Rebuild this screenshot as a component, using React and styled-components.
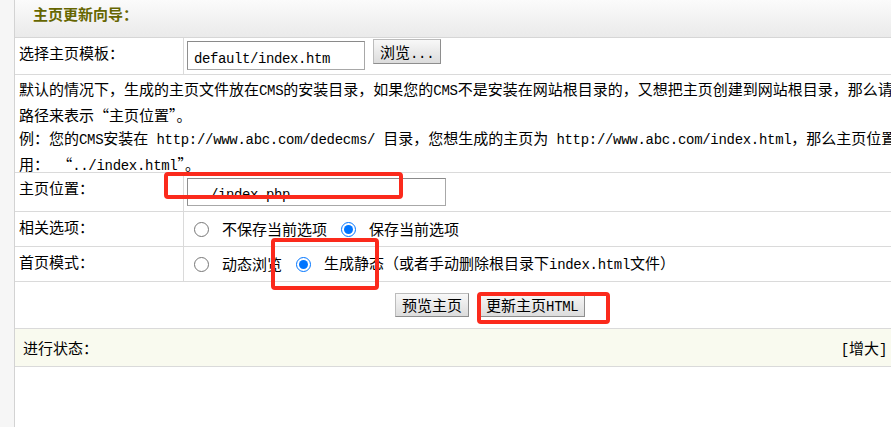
import React from 'react';
import styled, { createGlobalStyle } from 'styled-components';

const GlobalStyle = createGlobalStyle`
    html, body {
        margin: 0;
        padding: 0;
        background: #fff;
        overflow: hidden;
    }
    body {
        font-family: "Noto Sans CJK SC", "Liberation Sans", sans-serif;
        font-size: 15px;
        color: #000;
    }
`
const Page = styled.div`
    position: relative;
    display: flex;
    width: 891px;
    height: 427px;
    overflow: hidden;
`
const Sidebar = styled.div`
    width: 14px;
    flex: none;
    background: #f6f6f6;
    border-right: 1px solid #d3d3d3;
`
const Main = styled.div`
    flex: 1;
    min-width: 0;
    display: flex;
    flex-direction: column;
`
const Header = styled.div`
    height: 38px;
    flex: none;
    box-sizing: border-box;
    border-bottom: 1px solid #d6d6d6;
    background: linear-gradient(#fbfbfb, #eaeaea);
    padding-left: 18px;
    font-weight: bold;
    color: #666600;
    line-height: 28px;
    white-space: nowrap;
`
const Row = styled.div`
    display: flex;
    flex: none;
    height: ${props => props.$h}px;
    box-sizing: border-box;
    border-bottom: 1px solid #dadada;
    background: ${props => props.$tint ? '#f9faef' : '#fff'};
`
const Label = styled.div`
    width: 169px;
    flex: none;
    box-sizing: border-box;
    border-right: 1px solid #dadada;
    padding: 4px 0 0 4px;
    line-height: 22px;
    white-space: nowrap;
`
const Field = styled.div`
    flex: 1;
    display: flex;
    align-items: ${props => props.$top ? 'flex-start' : 'center'};
    padding-left: ${props => props.$pad}px;
    white-space: nowrap;
`
const Mono = styled.span`
    font-family: "Liberation Mono", monospace;
    font-size: 14px;
    letter-spacing: -0.3px;
`
const TextInput = styled.input`
    width: ${props => props.$w}px;
    height: ${props => props.$h}px;
    margin: ${props => props.$mt}px 0 0 0;
    box-sizing: border-box;
    padding: 6px 0 0 6px;
    border: 1px solid #a8a8a8;
    border-top-color: #8a8a8a;
    border-left-color: #8f8f8f;
    border-radius: 0;
    background: #fff;
    outline: none;
    font-family: "Liberation Mono", monospace;
    font-size: 14px;
    letter-spacing: -0.4px;
    color: #000;
`
const Button = styled.button`
    height: ${props => props.$h || 24}px;
    margin: ${props => props.$m || 0};
    padding: 0 6px;
    box-sizing: border-box;
    display: inline-block;
    font-family: "Noto Sans CJK SC", sans-serif;
    font-size: 15px;
    line-height: ${props => (props.$h || 24) - 2}px;
    white-space: nowrap;
    color: #000;
    background: linear-gradient(#f8f8f8, #dcdcdc);
    border: 1px solid #bcbcbc;
    border-right-color: #8e8e8e;
    border-bottom-color: #8e8e8e;
    border-radius: 0;
`
const Option = styled.label`
    display: inline-flex;
    align-items: center;
    margin-right: ${props => props.$gap || 0}px;
`
const OptionText = styled.span`
    line-height: 22px;
`
const Radio = styled.input.attrs({ type: 'radio' })`
    width: 15px;
    height: 15px;
    margin: 0 13px 0 0;
    flex: none;
`
const Desc = styled.div`
    flex: 1;
    padding: 2px 4px 0;
    line-height: 23px;
    white-space: nowrap;
`
const ButtonBar = styled.div`
    flex: 1;
    display: flex;
    align-items: center;
    gap: 10px;
    padding-left: 380px;
`
const StatusBar = styled.div`
    flex: 1;
    display: flex;
    align-items: center;
    justify-content: space-between;
    padding: 0 4px 0 8px;
    white-space: nowrap;
`
const Mark = styled.div`
    position: absolute;
    left: ${props => props.$x}px;
    top: ${props => props.$y}px;
    width: ${props => props.$w}px;
    height: ${props => props.$h}px;
    box-sizing: border-box;
    border: 4px solid #fb2a1c;
    border-radius: 4px;
    pointer-events: none;
`

export default function App() {
    return (
        <Page>
            <GlobalStyle />
            <Sidebar />
            <Main>
                <Header>主页更新向导：</Header>
                <Row $h={37}>
                    <Label>选择主页模板：</Label>
                    <Field $pad={3} $top>
                        <TextInput $w={178} $h={29} $mt={3} defaultValue="default/index.htm" />
                        <Button $h={25} $m="1px 0 0 8px">浏览<Mono>...</Mono></Button>
                    </Field>
                </Row>
                <Row $h={98}>
                    <Desc>
                        <div>默认的情况下，生成的主页文件放在<Mono>CMS</Mono>的安装目录，如果您的<Mono>CMS</Mono>不是安装在网站根目录的，又想把主页创建到网站根目录，那么请用相对</div>
                        <div>路径来表示“主页位置”。</div>
                        <div>例：您的<Mono>CMS</Mono>安装在<Mono> http://www.abc.com/dedecms/ </Mono>目录，您想生成的主页为<Mono> http://www.abc.com/index.html</Mono>，那么主页位置应该</div>
                        <div>用：<Mono> </Mono>“<Mono>../index.html</Mono>”。</div>
                    </Desc>
                </Row>
                <Row $h={39}>
                    <Label>主页位置：</Label>
                    <Field $pad={3} $top>
                        <TextInput $w={259} $h={28} $mt={5} defaultValue="../index.php" />
                    </Field>
                </Row>
                <Row $h={35}>
                    <Label>相关选项：</Label>
                    <Field $pad={10}>
                        <Option $gap={14}><Radio name="saveset" /><OptionText>不保存当前选项</OptionText></Option>
                        <Option><Radio name="saveset" defaultChecked /><OptionText>保存当前选项</OptionText></Option>
                    </Field>
                </Row>
                <Row $h={35}>
                    <Label>首页模式：</Label>
                    <Field $pad={10}>
                        <Option $gap={14}><Radio name="mode" /><OptionText>动态浏览</OptionText></Option>
                        <Option>
                            <Radio name="mode" defaultChecked />
                            <OptionText>生成静态（或者手动删除根目录下<Mono>index.html</Mono>文件）</OptionText>
                        </Option>
                    </Field>
                </Row>
                <Row $h={47}>
                    <ButtonBar>
                        <Button>预览主页</Button>
                        <Button>更新主页<Mono>HTML</Mono></Button>
                    </ButtonBar>
                </Row>
                <Row $h={38} $tint>
                    <StatusBar>
                        <span>进行状态：</span>
                        <span><Mono>[</Mono>增大<Mono>]</Mono></span>
                    </StatusBar>
                </Row>
            </Main>
            <Mark $x={164} $y={172} $w={239} $h={27} />
            <Mark $x={271} $y={238} $w={108} $h={52} />
            <Mark $x={477} $y={292} $w={133} $h={32} />
        </Page>
    );
}
